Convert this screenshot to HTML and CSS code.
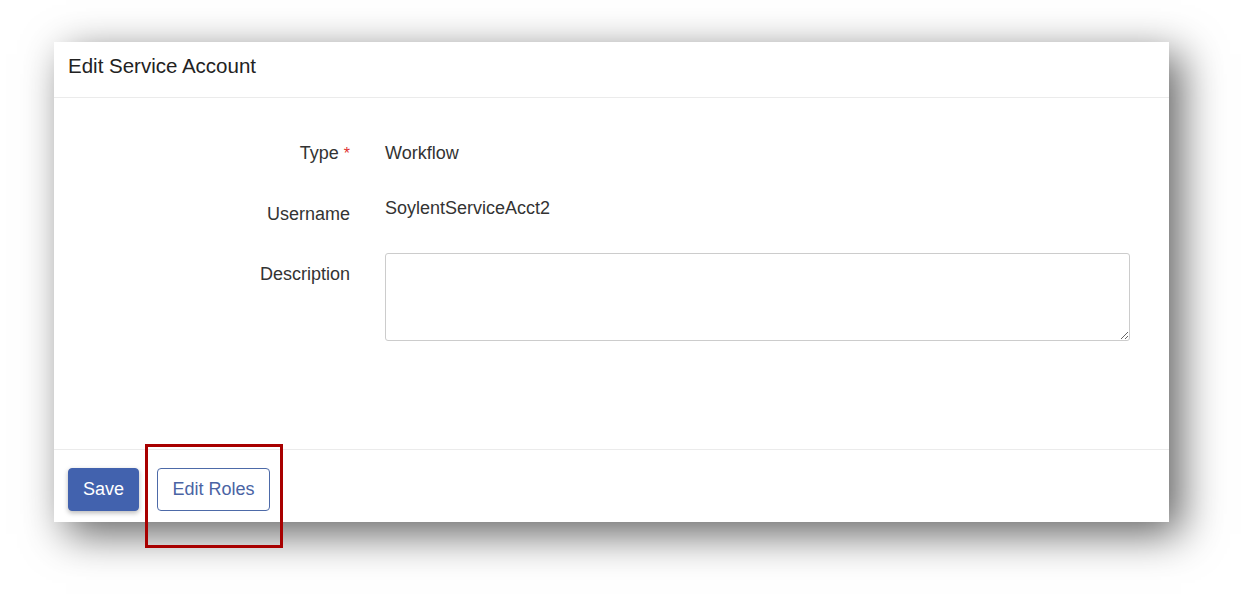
FILE: index.html
```html
<!DOCTYPE html>
<html lang="en">
<head>
<meta charset="utf-8">
<title>Edit Service Account</title>
<link rel="stylesheet" href="styles.css">
</head>
<body>
<div class="card">
  <div class="card-header">Edit Service Account</div>
  <div class="card-body">
    <div class="row row-type">
      <div class="label">Type <span class="req">*</span></div>
      <div class="value">Workflow</div>
    </div>
    <div class="row row-user">
      <div class="label label-user">Username</div>
      <div class="value">SoylentServiceAcct2</div>
    </div>
    <div class="row row-desc">
      <div class="label label-desc">Description</div>
      <div class="value"><textarea class="desc"></textarea></div>
    </div>
  </div>
  <div class="card-footer">
    <button class="btn btn-primary">Save</button>
    <button class="btn btn-outline">Edit Roles</button>
  </div>
  <div class="highlight"></div>
</div>
</body>
</html>
```
FILE: styles.css
```css
html, body {
  margin: 0;
  background: #ffffff;
}
body {
  box-sizing: border-box;
  min-height: 607px;
  padding: 42px 0 0 54px;
  font-family: "Liberation Sans", Arial, sans-serif;
  color: #333333;
}
.card {
  position: relative;
  width: 1115px;
  height: 480px;
  background: #ffffff;
  box-shadow: 12px 12px 40px rgba(0, 0, 0, 0.62);
  display: flex;
  flex-direction: column;
}
.card-header {
  padding: 12px 14px 19px 14px;
  line-height: 24px;
  font-size: 20.5px;
  color: #222222;
  border-bottom: 1px solid #ebebeb;
}
.card-body {
  flex: 1;
  padding-top: 44px;
  font-size: 18px;
  line-height: 22px;
}
.row {
  display: grid;
  grid-template-columns: 296px 745px;
  column-gap: 35px;
  align-items: start;
}
.label {
  text-align: right;
  color: #333333;
}
.value {
  color: #333333;
}
.req {
  color: #e03030;
  font-size: 16px;
}
.row-user {
  margin-top: 32px;
}
.label-user {
  padding-top: 6px;
}
.row-desc {
  margin-top: 28px;
}
.label-desc {
  padding-top: 10px;
}
.desc {
  display: block;
  box-sizing: border-box;
  width: 745px;
  height: 88px;
  margin: 0;
  border: 1px solid #cccccc;
  border-radius: 3px;
  font-family: inherit;
  font-size: 16px;
}
.card-footer {
  height: 73px;
  flex: none;
  border-top: 1px solid #ebebeb;
  box-sizing: border-box;
  padding: 18px 0 0 14px;
  display: flex;
  align-items: flex-start;
  gap: 18px;
}
.btn {
  height: 43px;
  box-sizing: border-box;
  font-family: "Liberation Sans", Arial, sans-serif;
  font-size: 18px;
  border-radius: 4px;
  padding: 0;
  cursor: pointer;
}
.btn-primary {
  width: 71px;
  background: #4262ae;
  border: 1px solid #4262ae;
  color: #ffffff;
  box-shadow: 0 2px 5px rgba(0, 0, 0, 0.28);
}
.btn-outline {
  width: 113px;
  background: #ffffff;
  border: 1px solid #4d6aa8;
  color: #4a64a4;
}
.highlight {
  position: absolute;
  left: 91px;
  top: 402px;
  width: 138px;
  height: 104px;
  box-sizing: border-box;
  border: 3px solid #a80000;
}
```
